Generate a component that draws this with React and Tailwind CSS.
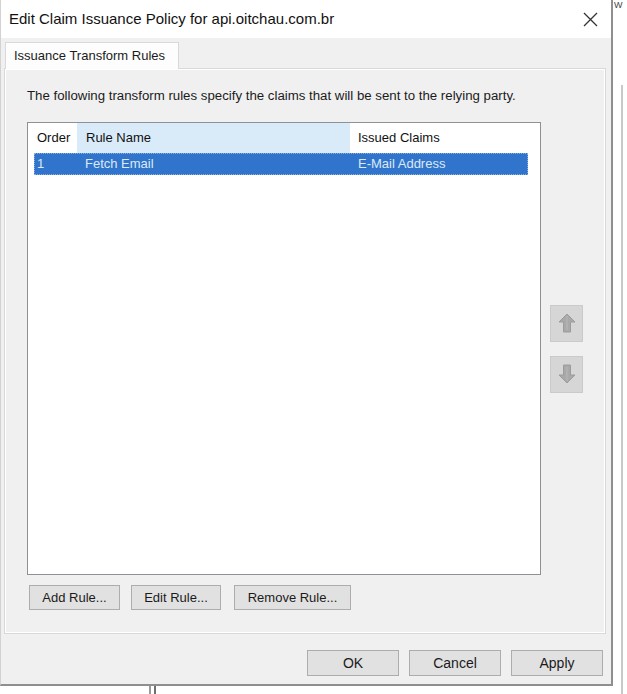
import React from 'react';

const btn = "flex items-center justify-center bg-[#e1e1e1] border border-[#adadad] text-[13px] text-[#1b1b1b]";

function Arrow({ down }) {
  return (
    <svg width="18" height="20" viewBox="0 0 18 20" className={down ? 'rotate-180' : ''}>
      <polygon points="9,1 17,9 12.5,9 12.5,19 5.5,19 5.5,9 1,9" fill="#a9a9a9" stroke="#9c9c9c" strokeWidth="1" />
      <line x1="9" y1="3" x2="9" y2="17" stroke="#b8b8b8" strokeWidth="1" />
    </svg>
  );
}

export default function App() {
  return (
    <div className="w-[627px] h-[694px] bg-white flex overflow-hidden font-['Liberation_Sans',Arial,sans-serif] text-[#1b1b1b]">
      <div className="flex flex-col w-[613px] shrink-0">
        <div className="w-[613px] h-[686px] flex flex-col bg-[#f0f0f0] border-l border-l-[#d2d2d2] border-r-2 border-r-[#8f8f8f] border-b-2 border-b-[#8f8f8f]">
          {/* title bar */}
          <div className="h-[38px] bg-white flex items-center justify-between pl-[8px] pr-[13px]">
            <span className="text-[15px] text-[#111]">Edit Claim Issuance Policy for api.oitchau.com.br</span>
            <svg width="15" height="15" viewBox="0 0 15 15">
              <path d="M1 1 L14 14 M14 1 L1 14" stroke="#333" strokeWidth="1.3" />
            </svg>
          </div>

          {/* tabs */}
          <div className="pl-[3px] pt-[4px]">
            <div className="ml-[1px] w-[174px] h-[27px] bg-[#fdfdfd] border border-b-0 border-[#d9d9d9] flex items-center pl-[8px] text-[13px] relative z-10 -mb-px">
              Issuance Transform Rules
            </div>
            <div className="w-[602px] h-[566px] border border-[#d9d9d9] bg-[#f0f0f0] shadow-[inset_0_0_0_1px_#ffffff] flex flex-col pl-[22px] pt-[19px]">
              <p className="text-[13.25px] leading-[16px]">
                The following transform rules specify the claims that will be sent to the relying party.
              </p>

              <div className="flex items-center mt-[18px]">
                <div className="w-[514px] h-[453px] border border-[#8e9196] bg-white flex flex-col">
                  <div className="h-[30px] flex text-[13px] text-[#111]">
                    <div className="w-[49px] flex items-center pl-[9px]">Order</div>
                    <div className="w-[273px] flex items-center pl-[9px] bg-[#d9ebf9]">Rule Name</div>
                    <div className="w-[179px] flex items-center pl-[8px]">Issued Claims</div>
                  </div>
                  <div className="ml-[6px] w-[494px] h-[22px] flex bg-[#3075cb] border border-dotted border-[#8aaee0] text-[13px] text-[#dde8f7]">
                    <div className="w-[42px] flex items-center pl-[2px]">1</div>
                    <div className="w-[273px] flex items-center pl-[8px]">Fetch Email</div>
                    <div className="flex items-center pl-[8px]">E-Mail Address</div>
                  </div>
                </div>

                <div className="ml-[9px] flex flex-col gap-[14px]">
                  <div className="w-[33px] h-[37px] bg-[#d6d6d6] border border-[#cacaca] flex items-center justify-center">
                    <Arrow />
                  </div>
                  <div className="w-[33px] h-[37px] bg-[#d6d6d6] border border-[#cacaca] flex items-center justify-center">
                    <Arrow down />
                  </div>
                </div>
              </div>

              <div className="flex mt-[10px] ml-[2px]">
                <button className={`${btn} w-[91px] h-[25px]`}>Add Rule...</button>
                <button className={`${btn} w-[90px] h-[25px] ml-[11px]`}>Edit Rule...</button>
                <button className={`${btn} w-[117px] h-[25px] ml-[13px]`}>Remove Rule...</button>
              </div>
            </div>
          </div>

          {/* dialog buttons */}
          <div className="flex justify-end pr-[8px] mt-[16px] gap-[10px]">
            <button className={`${btn} w-[92px] h-[26px] text-[14px]`}>OK</button>
            <button className={`${btn} w-[92px] h-[26px] text-[14px]`}>Cancel</button>
            <button className={`${btn} w-[92px] h-[26px] text-[14px]`}>Apply</button>
          </div>
        </div>
        <div className="flex h-[8px] pl-[149px] gap-[3px]">
          <div className="w-[2px] bg-[#9a9a9a]" />
          <div className="w-[2px] bg-[#6f6f6f]" />
        </div>
      </div>

      {/* background window edge */}
      <div className="flex flex-col w-[14px]">
        <div className="h-[12px] pl-px text-[9px] leading-[11px] text-[#444]">W</div>
        <div className="ml-[8px] w-[2px] mt-[73px] flex-1 bg-[#c9c9c9]" />
      </div>
    </div>
  );
}
